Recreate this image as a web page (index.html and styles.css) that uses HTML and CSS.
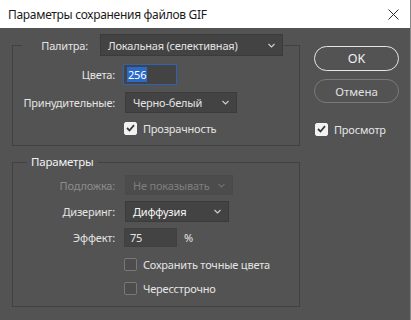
FILE: index.html
```html
<!DOCTYPE html>
<html>
  <head>
    <meta charset="utf-8" />
    <title>Параметры сохранения файлов GIF</title>
    <link rel="stylesheet" href="styles.css">
  </head>

  <body>
    <div class="window">
      <div class="titlebar">
        <span class="title">Параметры сохранения файлов GIF</span>
        <svg class="close" width="11" height="11" viewBox="0 0 11 11">
          <path d="M0.5 0.5 L10.5 10.5 M10.5 0.5 L0.5 10.5" stroke="#2a2a2a" stroke-width="1" fill="none" />
        </svg>
      </div>

      <div class="dialog">
        <div class="main">
          <fieldset class="group group-palette">
            <legend class="palette-legend">
              <span class="lbl-palette">Палитра:</span>
              <div class="select select-palette">
                <span>Локальная (селективная)</span>
                <svg class="chev" width="7" height="5" viewBox="0 0 7 5"><path d="M0.5 1 L3.5 4 L6.5 1" stroke="#cfcfcf" stroke-width="1.1" fill="none" /></svg>
              </div>
            </legend>

            <div class="rows rows-palette">
              <span class="lbl">Цвета:</span>
              <div class="field field-colors"><span class="selected">256</span></div>

              <span class="lbl">Принудительные:</span>
              <div class="select select-forced">
                <span>Черно-белый</span>
                <svg class="chev" width="7" height="5" viewBox="0 0 7 5"><path d="M0.5 1 L3.5 4 L6.5 1" stroke="#cfcfcf" stroke-width="1.1" fill="none" /></svg>
              </div>

              <span></span>
              <div class="check-row">
                <span class="box checked">
                  <svg width="9" height="8" viewBox="0 0 9 8"><path d="M1 4 L3.5 6.5 L8 1.2" stroke="#3a3a3a" stroke-width="1.8" fill="none" /></svg>
                </span>
                <span>Прозрачность</span>
              </div>
            </div>
          </fieldset>

          <fieldset class="group group-params">
            <legend class="params-legend">Параметры</legend>

            <div class="rows rows-params">
              <span class="lbl disabled">Подложка:</span>
              <div class="select select-matte">
                <span>Не показывать</span>
                <svg class="chev" width="7" height="5" viewBox="0 0 7 5"><path d="M0.5 1 L3.5 4 L6.5 1" stroke="#6e6e6e" stroke-width="1.1" fill="none" /></svg>
              </div>

              <span class="lbl">Дизеринг:</span>
              <div class="select select-dither">
                <span>Диффузия</span>
                <svg class="chev" width="7" height="5" viewBox="0 0 7 5"><path d="M0.5 1 L3.5 4 L6.5 1" stroke="#cfcfcf" stroke-width="1.1" fill="none" /></svg>
              </div>

              <span class="lbl">Эффект:</span>
              <div class="effect">
                <div class="field field-effect">75</div>
                <span class="percent">%</span>
              </div>

              <span></span>
              <div class="check-row check-exact">
                <span class="box"></span>
                <span>Сохранить точные цвета</span>
              </div>

              <span></span>
              <div class="check-row check-interlace">
                <span class="box"></span>
                <span>Чересстрочно</span>
              </div>
            </div>
          </fieldset>
        </div>

        <div class="side">
          <button class="btn btn-ok">OK</button>
          <button class="btn btn-cancel">Отмена</button>
          <div class="check-row check-preview">
            <span class="box checked">
              <svg width="9" height="8" viewBox="0 0 9 8"><path d="M1 4 L3.5 6.5 L8 1.2" stroke="#3a3a3a" stroke-width="1.8" fill="none" /></svg>
            </span>
            <span>Просмотр</span>
          </div>
        </div>
      </div>
    </div>
  </body>
</html>
```

FILE: styles.css
```css
body {
  margin: 0;
  background-color: #535353;
  font-family: "Noto Sans", "Open Sans", Arial, sans-serif;
  font-size: 11px;
  letter-spacing: -0.2px;
  color: #e4e4e4;
}

.window {
  width: 410px;
  height: 320px;
  border-right: 1px solid #8a8a8a;
  background-color: #535353;
  overflow: hidden;
}

.titlebar {
  height: 28px;
  background-color: #ffffff;
  display: flex;
  align-items: center;
  justify-content: space-between;
  padding: 0 11px 0 8px;
}

.title {
  color: #1a1a1a;
  font-size: 12px;
  letter-spacing: -0.3px;
}

.dialog {
  display: flex;
  padding: 6px 0 0 12px;
}

.main {
  width: 288px;
}

/* groups */

.group {
  margin: 0;
  padding: 0;
  border: 1px solid #414141;
  min-width: 0;
}

.palette-legend {
  display: flex;
  align-items: center;
  margin-left: 9px;
  padding: 0 1px 0 0;
}

.lbl-palette {
  width: 66px;
  text-align: right;
  margin-right: 12px;
}

.params-legend {
  margin-left: 14px;
  padding: 0 4px;
  color: #f2f2f2;
  font-size: 11.5px;
  line-height: 14px;
}

.group-params {
  margin-top: 9px;
}

.rows {
  display: grid;
  grid-template-columns: 102px 1fr;
  column-gap: 8px;
  align-items: center;
}

.rows-palette {
  padding: 8px 0 9px 0;
  row-gap: 7px;
}

.rows-params {
  padding: 6px 0 10px 0;
  row-gap: 6px;
}

.lbl {
  text-align: right;
  white-space: nowrap;
}

.disabled {
  color: #8c8c8c;
}

/* selects and fields */

.select {
  display: flex;
  align-items: center;
  justify-content: space-between;
  box-sizing: border-box;
  background-color: #434343;
  border: 1px solid #3b3b3b;
  padding: 0 7px 0 7px;
  white-space: nowrap;
}

.select-palette {
  width: 183px;
  height: 22px;
}

.select-forced {
  width: 112px;
  height: 21px;
  margin-left: 2px;
}

.select-matte {
  width: 108px;
  height: 20px;
  margin-left: 2px;
  background-color: #4c4c4c;
  border-color: #4a4a4a;
  color: #7e7e7e;
}

.select-dither {
  width: 104px;
  height: 21px;
  margin-left: 2px;
  color: #f6f6f6;
}

.field {
  box-sizing: border-box;
  background-color: #434343;
  display: flex;
  align-items: center;
}

.field-colors {
  width: 54px;
  height: 21px;
  border: 1px solid #2d63b0;
  padding-left: 3px;
}

.selected {
  background-color: #2b69c9;
  color: #ffffff;
  padding: 0 1px;
  line-height: 15px;
}

.effect {
  display: flex;
  align-items: center;
}

.field-effect {
  width: 53px;
  height: 19px;
  border: 1px solid #404040;
  padding-left: 5px;
  margin-left: 1px;
}

.percent {
  margin-left: 7px;
}

/* checkboxes */

.check-row {
  display: flex;
  align-items: center;
  height: 16px;
}

.box {
  box-sizing: border-box;
  width: 13px;
  height: 13px;
  border: 1px solid #787878;
  border-radius: 2px;
  background-color: #4d4d4d;
  margin-right: 6px;
  display: flex;
  align-items: center;
  justify-content: center;
}

.box.checked {
  background-color: #f2f2f2;
  border-color: #f2f2f2;
}

.rows .check-row {
  margin-left: 1px;
}

.check-exact {
  margin-top: 3px;
}

.check-interlace {
  margin-top: 2px;
}

/* side buttons */

.side {
  width: 85px;
  margin-left: 14px;
  padding-top: 12px;
  display: flex;
  flex-direction: column;
}

.btn {
  height: 25px;
  border-radius: 13px;
  background-color: transparent;
  font-family: inherit;
  font-size: 11.5px;
  padding: 0;
}

.btn-ok {
  border: 1.5px solid #e6e6e6;
  color: #f2f2f2;
  font-size: 12.5px;
}

.btn-cancel {
  margin-top: 8px;
  height: 24px;
  border: 1px solid #7a7a7a;
  color: #e0e0e0;
}

.check-preview {
  margin-top: 18px;
  margin-left: 1px;
}
```
